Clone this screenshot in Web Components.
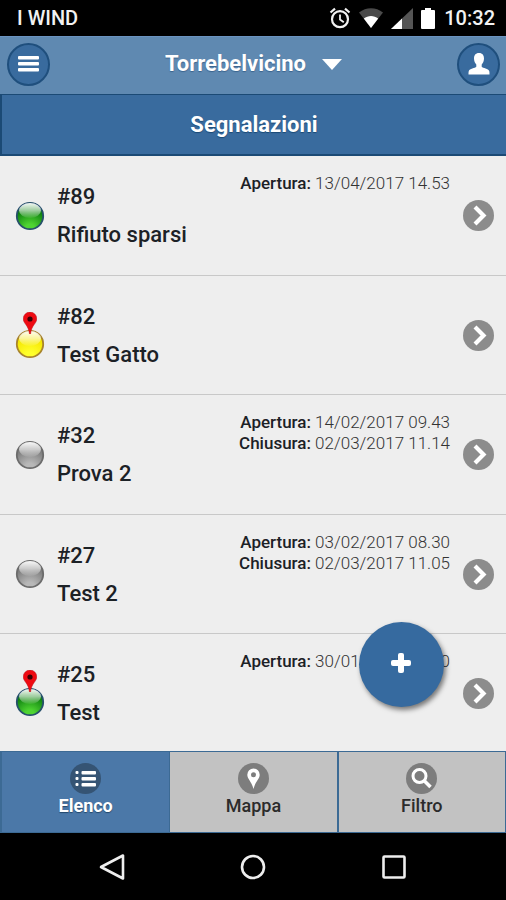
<!DOCTYPE html>
<html lang="it">
<head>
<meta charset="utf-8">
<meta name="viewport" content="width=device-width, initial-scale=1">
<title>Segnalazioni</title>
<style>
    html, body {
        height: 100%;
        margin: 0;
    }
    body {
        font-family: Roboto, "Liberation Sans", sans-serif;
        background: #eee;
    }
</style>
</head>
<body>
<report-app>
    <status-bar slot="status" carrier="I WIND" time="10:32"></status-bar>
    <app-header slot="header">Torrebelvicino</app-header>
    <page-title slot="header">Segnalazioni</page-title>

    <report-item number="89" status="green" opened="13/04/2017 14.53">Rifiuto sparsi</report-item>
    <report-item number="82" status="yellow" pinned>Test Gatto</report-item>
    <report-item number="32" status="gray" opened="14/02/2017 09.43" closed="02/03/2017 11.14">Prova 2</report-item>
    <report-item number="27" status="gray" opened="03/02/2017 08.30" closed="02/03/2017 11.05">Test 2</report-item>
    <report-item number="25" status="green" opened="30/01/2017 10.20" pinned>Test</report-item>

    <add-button slot="action"></add-button>

    <tab-bar slot="footer">
        <tab-item icon="list" active>Elenco</tab-item>
        <tab-item icon="pin">Mappa</tab-item>
        <tab-item icon="search">Filtro</tab-item>
    </tab-bar>
    <system-nav slot="footer"></system-nav>
</report-app>

<script>
class ReportApp extends HTMLElement {
    constructor() {
        super();
        this.attachShadow({ mode: 'open' });
        this.shadowRoot.innerHTML = `
            <style>
                :host {
                    display: flex;
                    flex-direction: column;
                    height: 100vh;
                }
                .content {
                    flex: 1;
                    min-height: 0;
                    position: relative;
                    display: flex;
                }
                main {
                    flex: 1;
                    display: grid;
                    grid-auto-rows: 120px 119px;
                    overflow: hidden;
                }
            </style>
            <slot name="status"></slot>
            <slot name="header"></slot>
            <div class="content">
                <main><slot></slot></main>
                <slot name="action"></slot>
            </div>
            <slot name="footer"></slot>
        `;
    }
}

class StatusBar extends HTMLElement {
    constructor() {
        super();
        this.attachShadow({ mode: 'open' });
    }

    connectedCallback() {
        this.shadowRoot.innerHTML = `
            <style>
                :host {
                    display: flex;
                    align-items: center;
                    justify-content: space-between;
                    height: 36px;
                    padding: 0 11px 0 17px;
                    background: #000;
                    color: #f2f2f2;
                    font-size: 20px;
                    font-weight: 500;
                    line-height: 24px;
                }
                .right {
                    display: flex;
                    align-items: center;
                    gap: 8px;
                }
                svg { display: block; }
            </style>
            <span>${this.getAttribute('carrier')}</span>
            <div class="right">
                <svg width="22" height="22" viewBox="0 0 22 22" fill="none" stroke="#f2f2f2">
                    <circle cx="11" cy="12.200" r="8" stroke-width="2.200"/>
                    <path d="M11 7.500v5l3.800 2.800" stroke-width="1.800"/>
                    <path d="M1.500 5.500 6 1.700M20.500 5.500 16 1.700" stroke-width="2.200"/>
                </svg>
                <svg width="24" height="20" viewBox="0 0 24 20">
                    <path d="M0 4.500C7-1.300 17-1.300 24 4.500L12 20z" fill="#4a4a4a"/>
                    <path d="M4.800 10.500C9 7 15 7 19.200 10.500L12 20z" fill="#fff"/>
                </svg>
                <svg width="22" height="21" viewBox="0 0 22 21">
                    <path d="M0 21 22 0v21z" fill="#555"/>
                    <path d="M0 21 11 10.500V21z" fill="#fff"/>
                </svg>
                <svg width="15" height="21" viewBox="1 0 15 21">
                    <path d="M5 0h6v2h3q1 0 1 1v17q0 1-1 1H2q-1 0-1-1V3q0-1 1-1h3z" fill="#fff"/>
                </svg>
                <span>${this.getAttribute('time')}</span>
            </div>
        `;
    }
}

class AppHeader extends HTMLElement {
    constructor() {
        super();
        this.attachShadow({ mode: 'open' });
        this.shadowRoot.innerHTML = `
            <style>
                :host {
                    display: flex;
                    align-items: center;
                    justify-content: space-between;
                    height: 58px;
                    padding: 0 6px 3px 7px;
                    box-sizing: border-box;
                    background: #5f89b1;
                    border-top: 1px solid #6b93c0;
                }
                button {
                    font: inherit;
                    color: #fff;
                    border: 0;
                    background: none;
                    padding: 0;
                }
                .round {
                    display: grid;
                    place-items: center;
                    width: 43px;
                    height: 43px;
                    border: 2px solid #1f4f7d;
                    border-radius: 50%;
                    background: #396b9e;
                }
                .place {
                    display: flex;
                    align-items: center;
                    gap: 16px;
                    font-size: 22px;
                    font-weight: 700;
                    line-height: 28px;
                    text-shadow: 0 1px 1px #3a648e;
                }
            </style>
            <button class="round" aria-label="Menu">
                <svg width="21" height="16" viewBox="0 0 21 16" fill="#fff">
                    <rect width="21" height="3.500" rx="1"/>
                    <rect y="6" width="21" height="3.500" rx="1"/>
                    <rect y="12" width="21" height="3.500" rx="1"/>
                </svg>
            </button>
            <button class="place">
                <slot></slot>
                <svg width="20" height="11" viewBox="0 0 20 11"><path d="M0 0h20L10 11z" fill="#fff"/></svg>
            </button>
            <button class="round" aria-label="Profilo">
                <svg width="22" height="22" viewBox="0 0 22 22">
                    <path d="M11 0c3.500 0 5 2.400 5 5.600 0 2.600-1 4.500-2.300 6v2.200c1 1.300 7 2 7.500 4.200.3 1 .3 2 .3 3.500h-21c0-1.500 0-2.500.3-3.500.5-2.200 6.500-2.900 7.500-4.200v-2.200C7 10.100 6 8.200 6 5.600 6 2.400 7.500 0 11 0z" fill="#fff"/>
                </svg>
            </button>
        `;
    }
}

class PageTitle extends HTMLElement {
    constructor() {
        super();
        this.attachShadow({ mode: 'open' });
        this.shadowRoot.innerHTML = `
            <style>
                :host {
                    display: block;
                    background: #396b9e;
                    border: 1px solid #1b4a75;
                    border-width: 1px 0 2px 2px;
                }
                h1 {
                    margin: 0;
                    color: #fff;
                    font-size: 22px;
                    font-weight: 700;
                    line-height: 59px;
                    text-align: center;
                    text-shadow: 0 1px 1px #1b4a75;
                }
            </style>
            <h1><slot></slot></h1>
        `;
    }
}

class StatusBall extends HTMLElement {
    constructor() {
        super();
        this.attachShadow({ mode: 'open' });
    }

    connectedCallback() {
        const palettes = {
            green: ['#0d800f', '#4fd432', '#27506b'],
            yellow: ['#f5e600', '#ffff2c', '#a8842c'],
            gray: ['#7c7c7c', '#b8b8b8', '#6c6c6c']
        };
        const [base, glow, edge] = palettes[this.getAttribute('color')];
        const pin = this.hasAttribute('pinned') ? `
            <svg class="pin" width="14" height="22" viewBox="0 0 14 22">
                <path d="M7 0a6.800 6.800 0 0 1 6.800 6.800C13.800 11.500 8.500 13 7.500 22h-1C5.500 13 .2 11.500.2 6.800A6.800 6.800 0 0 1 7 0z" fill="#ee0a12" stroke="#b8101c" stroke-width=".5"/>
                <circle cx="7" cy="7" r="2.600" fill="#3a0004"/>
            </svg>` : '';
        this.shadowRoot.innerHTML = `
            <style>
                :host {
                    display: flex;
                    flex-direction: column;
                    align-items: center;
                    width: 36px;
                }
                svg { display: block; }
                .pin {
                    margin-bottom: -5px;
                    z-index: 1;
                }
            </style>
            ${pin}
            <svg width="30" height="30" viewBox="0 0 30 30">
                <defs>
                    <radialGradient id="body" cx=".5" cy="1" r=".75">
                        <stop offset="0" stop-color="${glow}"/>
                        <stop offset=".25" stop-color="${glow}"/>
                        <stop offset="1" stop-color="${base}"/>
                    </radialGradient>
                    <linearGradient id="shine" x2="0" y2="1">
                        <stop offset="0" stop-color="#fff" stop-opacity=".95"/>
                        <stop offset=".5" stop-color="#fff" stop-opacity=".6"/>
                        <stop offset="1" stop-color="#fff" stop-opacity=".05"/>
                    </linearGradient>
                </defs>
                <circle cx="15" cy="15" r="13.200" fill="url(#body)" stroke="${edge}" stroke-width="1.800"/>
                <ellipse cx="15" cy="9.500" rx="11" ry="7.500" fill="url(#shine)"/>
            </svg>
        `;
    }
}

class ReportItem extends HTMLElement {
    constructor() {
        super();
        this.attachShadow({ mode: 'open' });
    }

    dateLine(label, value) {
        return value ? `<div><b>${label}:</b> ${value}</div>` : '';
    }

    connectedCallback() {
        this.shadowRoot.innerHTML = `
            <style>
                :host {
                    display: block;
                    border-bottom: 1px solid #c8c8c8;
                }
                a {
                    display: flex;
                    align-items: center;
                    height: 100%;
                    padding: 0 12px;
                    color: #1c2126;
                    text-decoration: none;
                }
                .text {
                    flex: 1;
                    margin-left: 9px;
                    padding-top: 1px;
                    font-size: 22px;
                    font-weight: 500;
                    line-height: 38px;
                }
                .dates {
                    align-self: flex-start;
                    margin: 17px 13px 0 0;
                    font-size: 17px;
                    font-weight: 300;
                    line-height: 21px;
                    text-align: right;
                    color: #333;
                }
                .dates b {
                    font-weight: 500;
                    color: #1c2126;
                }
            </style>
            <a href="#${this.getAttribute('number')}">
                <status-ball color="${this.getAttribute('status')}" ${this.hasAttribute('pinned') ? 'pinned' : ''}></status-ball>
                <div class="text">
                    <div>#${this.getAttribute('number')}</div>
                    <div><slot></slot></div>
                </div>
                <div class="dates">
                    ${this.dateLine('Apertura', this.getAttribute('opened'))}
                    ${this.dateLine('Chiusura', this.getAttribute('closed'))}
                </div>
                <svg width="31" height="31" viewBox="0 0 31 31">
                    <circle cx="15.500" cy="15.500" r="15.500" fill="#8c8c8c"/>
                    <path d="M12 7l8.500 8.500L12 24" fill="none" stroke="#fff" stroke-width="4.200"/>
                </svg>
            </a>
        `;
    }
}

class AddButton extends HTMLElement {
    constructor() {
        super();
        this.attachShadow({ mode: 'open' });
        // floats over the list, bottom right
        this.shadowRoot.innerHTML = `
            <style>
                :host {
                    display: block;
                    position: absolute;
                    right: 62px;
                    bottom: 44px;
                }
                button {
                    display: grid;
                    place-items: center;
                    width: 85px;
                    height: 85px;
                    padding: 0 1px 3px 0;
                    border: 0;
                    border-radius: 50%;
                    background: #366a9f;
                    box-shadow: 2px 3px 5px rgba(0, 0, 0, .5);
                }
            </style>
            <button aria-label="Nuova segnalazione">
                <svg width="20" height="20" viewBox="0 0 20 20" fill="#fff">
                    <rect x="7" width="6" height="20" rx="2"/>
                    <rect y="7" width="20" height="6" rx="2"/>
                </svg>
            </button>
        `;
    }
}

class TabBar extends HTMLElement {
    constructor() {
        super();
        this.attachShadow({ mode: 'open' });
        this.shadowRoot.innerHTML = `
            <style>
                :host {
                    display: block;
                    border: 1px solid #3c6a94;
                    border-left: 0;
                }
                nav {
                    display: grid;
                    grid-template-columns: repeat(3, 1fr);
                }
                /* the tab after the active one only gets a hairline */
                ::slotted([active]) { margin-right: -1px; }
            </style>
            <nav><slot></slot></nav>
        `;
    }
}

class TabItem extends HTMLElement {
    constructor() {
        super();
        this.attachShadow({ mode: 'open' });
    }

    connectedCallback() {
        const icons = {
            list: `<g fill="#fff">
                <rect x="5.500" y="8" width="3" height="3" rx="1"/><rect x="11.500" y="8" width="14.500" height="3.500" rx="1"/>
                <rect x="5.500" y="14" width="3" height="3" rx="1"/><rect x="11.500" y="14" width="14.500" height="3.500" rx="1"/>
                <rect x="5.500" y="20" width="3" height="3" rx="1"/><rect x="11.500" y="20" width="14.500" height="3.500" rx="1"/>
            </g>`,
            pin: `<path d="M15.500 5.500a6.200 6.200 0 0 1 6.200 6.200c0 4.300-4.200 6.300-6.200 14.300-2-8-6.200-10-6.200-14.300a6.200 6.200 0 0 1 6.200-6.200z" fill="#fff"/>
                <circle cx="15.500" cy="11.700" r="2.500" fill="#7d7d7d"/>`,
            search: `<g fill="none" stroke="#fff">
                <circle cx="13.500" cy="13" r="6.500" stroke-width="3"/>
                <path d="M18 17.500l6.500 6.500" stroke-width="3.600"/>
            </g>`
        };
        this.shadowRoot.innerHTML = `
            <style>
                :host {
                    display: block;
                    background: #c2c2c2;
                    color: #2b2b2b;
                    font-weight: 500;
                    --disc: #7d7d7d;
                    border-left: 2px solid #3c6a94;
                }
                :host([active]) {
                    position: relative;
                    background: #4b78a8;
                    color: #fff;
                    font-weight: 700;
                    text-shadow: 0 1px 1px #24486b;
                    --disc: #355474;
                }
                a {
                    display: flex;
                    flex-direction: column;
                    align-items: center;
                    gap: 2px;
                    padding: 11px 0 16px;
                    color: inherit;
                    text-decoration: none;
                    font-size: 18px;
                    line-height: 20px;
                }
                .disc { fill: var(--disc); }
            </style>
            <a href="#${this.getAttribute('icon')}">
                <svg width="31" height="31" viewBox="0 0 31 31">
                    <circle class="disc" cx="15.500" cy="15.500" r="15.500"/>
                    ${icons[this.getAttribute('icon')]}
                </svg>
                <slot></slot>
            </a>
        `;
    }
}

class SystemNav extends HTMLElement {
    constructor() {
        super();
        this.attachShadow({ mode: 'open' });
        this.shadowRoot.innerHTML = `
            <style>
                :host {
                    display: flex;
                    height: 67px;
                    padding: 0 42px;
                    background: #000;
                }
                button {
                    flex: 1;
                    display: grid;
                    place-items: center;
                    padding: 0;
                    border: 0;
                    background: none;
                }
                svg {
                    fill: none;
                    stroke: #eee;
                    stroke-width: 2.600;
                    stroke-linejoin: round;
                }
            </style>
            <button aria-label="Indietro">
                <svg width="28" height="28" viewBox="0 0 28 28"><path d="M25 2.500v23L3 14z"/></svg>
            </button>
            <button aria-label="Home">
                <svg width="28" height="28" viewBox="0 0 28 28"><circle cx="14" cy="14" r="11"/></svg>
            </button>
            <button aria-label="Recenti">
                <svg width="28" height="28" viewBox="0 0 28 28"><rect x="3.500" y="3.500" width="21" height="21" rx="1"/></svg>
            </button>
        `;
    }
}

customElements.define('report-app', ReportApp);
customElements.define('status-bar', StatusBar);
customElements.define('app-header', AppHeader);
customElements.define('page-title', PageTitle);
customElements.define('status-ball', StatusBall);
customElements.define('report-item', ReportItem);
customElements.define('add-button', AddButton);
customElements.define('tab-bar', TabBar);
customElements.define('tab-item', TabItem);
customElements.define('system-nav', SystemNav);
</script>
</body>
</html>
